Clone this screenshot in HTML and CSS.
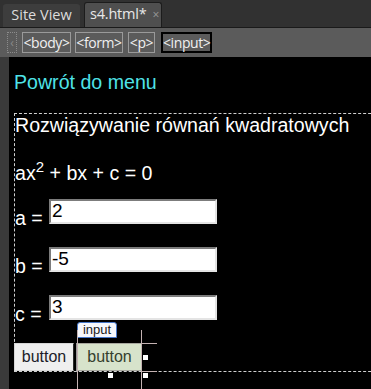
FILE: index.html
```html
<!DOCTYPE html>
<html lang="pl">
<head>
  <meta charset="UTF-8">
  <meta name="viewport" content="width=device-width, initial-scale=1.0">
  <title>s4.html</title>
  <link rel="stylesheet" href="styles.css">
</head>
<body>
  <div class="tabs">
    <div class="tab">Site View</div>
    <div class="tab active">s4.html*<span class="close">×</span></div>
  </div>

  <div class="crumbs">
    <span class="crumb-arrow">‹</span>
    <span class="crumb body-tag">&lt;body&gt;</span>
    <span class="crumb form-tag">&lt;form&gt;</span>
    <span class="crumb p-tag">&lt;p&gt;</span>
    <span class="crumb current">&lt;input&gt;</span>
  </div>

  <div class="design">
    <div class="gutter"></div>
    <div class="page">
      <a class="back" href="#">Powrót do menu</a>

      <form class="calc">
        <p class="title">Rozwiązywanie równań kwadratowych</p>
        <p class="formula">ax<sup>2</sup> + bx + c = 0</p>
        <p class="field"><span class="label">a =</span><input type="text" value="2"></p>
        <p class="field"><span class="label">b =</span><input type="text" value="-5"></p>
        <p class="field"><span class="label">c =</span><input type="text" value="3"></p>

        <div class="actions">
          <input type="button" class="btn" value="button">
          <span class="selected">
            <input type="button" class="btn picked" value="button">
            <span class="tag">input</span>
            <span class="guide v left"></span>
            <span class="guide v right"></span>
            <span class="guide h top"></span>
            <span class="guide h bottom"></span>
            <span class="handle mid-right"></span>
            <span class="handle bottom-mid"></span>
            <span class="handle bottom-right"></span>
          </span>
        </div>
      </form>
    </div>
  </div>
</body>
</html>
```

FILE: styles.css
```css
html, body {
  margin: 0;
  height: 100%;
  overflow: hidden;
}

body {
  display: flex;
  flex-direction: column;
  background-color: #000;
  font-family: "Open Sans", sans-serif;
}

/* document tabs */
.tabs {
  display: flex;
  flex: none;
  align-items: flex-end;
  gap: 4px;
  height: 27px;
  padding-left: 3px;
  background-color: #313131;
}

.tab {
  box-sizing: border-box;
  width: 77px;
  height: 23px;
  background-color: #3d3d3d;
  border-radius: 3px 3px 0 0;
  color: #dcdcdc;
  font-size: 14.5px;
  line-height: 22px;
  text-align: center;
  white-space: nowrap;
}

.tab.active {
  width: 78px;
  height: 25px;
  padding-left: 5px;
  background-color: #4f4f4f;
  border: 1px solid #1c1c1c;
  border-bottom: none;
  color: #e8e8e8;
  text-align: left;
  letter-spacing: -0.2px;
}

.tab .close {
  margin-left: 6px;
  color: #9a9a9a;
  font-size: 12px;
}

/* tag selector */
.crumbs {
  display: flex;
  flex: none;
  align-items: center;
  gap: 4px;
  height: 29px;
  padding-left: 7px;
  border-top: 1px solid #1a1a1a;
  background-color: #5b5b5b;
}

.crumb-arrow,
.crumb {
  box-sizing: border-box;
  height: 21px;
  color: #f0f0f0;
  font-size: 14px;
  line-height: 19px;
  text-align: center;
  white-space: nowrap;
}

.crumb-arrow {
  width: 10px;
  margin-right: 1px;
  border: 1px dotted #8c8c8c;
  color: #8a8a8a;
  font-size: 12px;
}

.crumb {
  border: 1px solid #9a9a9a;
  letter-spacing: -0.4px;
}

.body-tag { width: 49px; }
.form-tag { width: 48px; }
.p-tag { width: 27px; margin-left: 1px; }

.crumb.current {
  width: 51px;
  margin-left: 2px;
  border: 2px solid #000;
  line-height: 17px;
}

/* design view */
.design {
  flex: 1;
  display: flex;
  min-width: 0;
  overflow: hidden;
  background-color: #000;
}

.gutter {
  flex: none;
  width: 9px;
  background-color: #3a3a3a;
}

.page {
  flex: 1;
  min-width: 0;
  padding: 14px 0 0 5px;
  font-family: "Liberation Sans", Arial, sans-serif;
  font-size: 19.6px;
  line-height: 23px;
  color: #fff;
}

.back {
  display: block;
  color: #4fe3e8;
  text-decoration: none;
}

.calc {
  width: 400px;
  margin-top: 19px;
  border: 1px dashed #d0d0d0;
}

.calc p {
  margin: 0;
}

.title {
  margin-bottom: 25px !important;
}

.formula sup {
  font-size: 15px;
  line-height: 0;
}

.formula {
  margin-bottom: 14px !important;
}

.field {
  display: flex;
  align-items: flex-start;
  height: 25px;
  margin-bottom: 23px !important;
}

.field .label {
  margin-top: 8px;
  width: 34px;
}

.field input {
  box-sizing: border-box;
  width: 168px;
  height: 25px;
  padding: 0 1px 1px;
  border: 2px solid;
  border-color: #7c7c7c #e4e4e4 #e4e4e4 #7c7c7c;
  background-color: #fff;
  color: #000;
  font-family: "Liberation Sans", Arial, sans-serif;
  font-size: 19px;
}

.actions {
  display: flex;
  gap: 2px;
  margin-left: -1px;
}

.btn {
  box-sizing: border-box;
  width: 60px;
  height: 28px;
  padding: 0;
  border: 1px solid #d6d6d6;
  border-right-color: #2a2a2a;
  background-color: #efefef;
  color: #1c1c28;
  font-family: "Liberation Sans", Arial, sans-serif;
  font-size: 16px;
}

.selected {
  position: relative;
  display: block;
}

.btn.picked {
  width: 66px;
  border: 1px solid #a8a8a0;
  border-left: 2px solid #9a9a9a;
  background-color: #d7e3cb;
  color: #34402e;
}

.tag {
  position: absolute;
  left: 1px;
  top: -21px;
  box-sizing: border-box;
  width: 40px;
  height: 16px;
  border: 1px solid #4677c8;
  border-radius: 3px 3px 0 0;
  background-color: #f6f8fc;
  color: #1a1a1a;
  font-size: 13px;
  line-height: 14px;
  text-align: center;
}

.guide {
  position: absolute;
  background-color: #c4b2b2;
}

.guide.v {
  top: -13px;
  width: 1px;
  height: 60px;
}

.guide.left { left: 1px; }
.guide.right { left: 65px; }

.guide.h {
  left: 65px;
  width: 16px;
  height: 1px;
}

.guide.top { top: 0; }
.guide.bottom { top: 28px; }

.handle {
  position: absolute;
  width: 5px;
  height: 5px;
  background-color: #fff;
}

.handle.mid-right { left: 67px; top: 12px; }
.handle.bottom-mid { left: 32px; top: 30px; }
.handle.bottom-right { left: 67px; top: 30px; }
```
